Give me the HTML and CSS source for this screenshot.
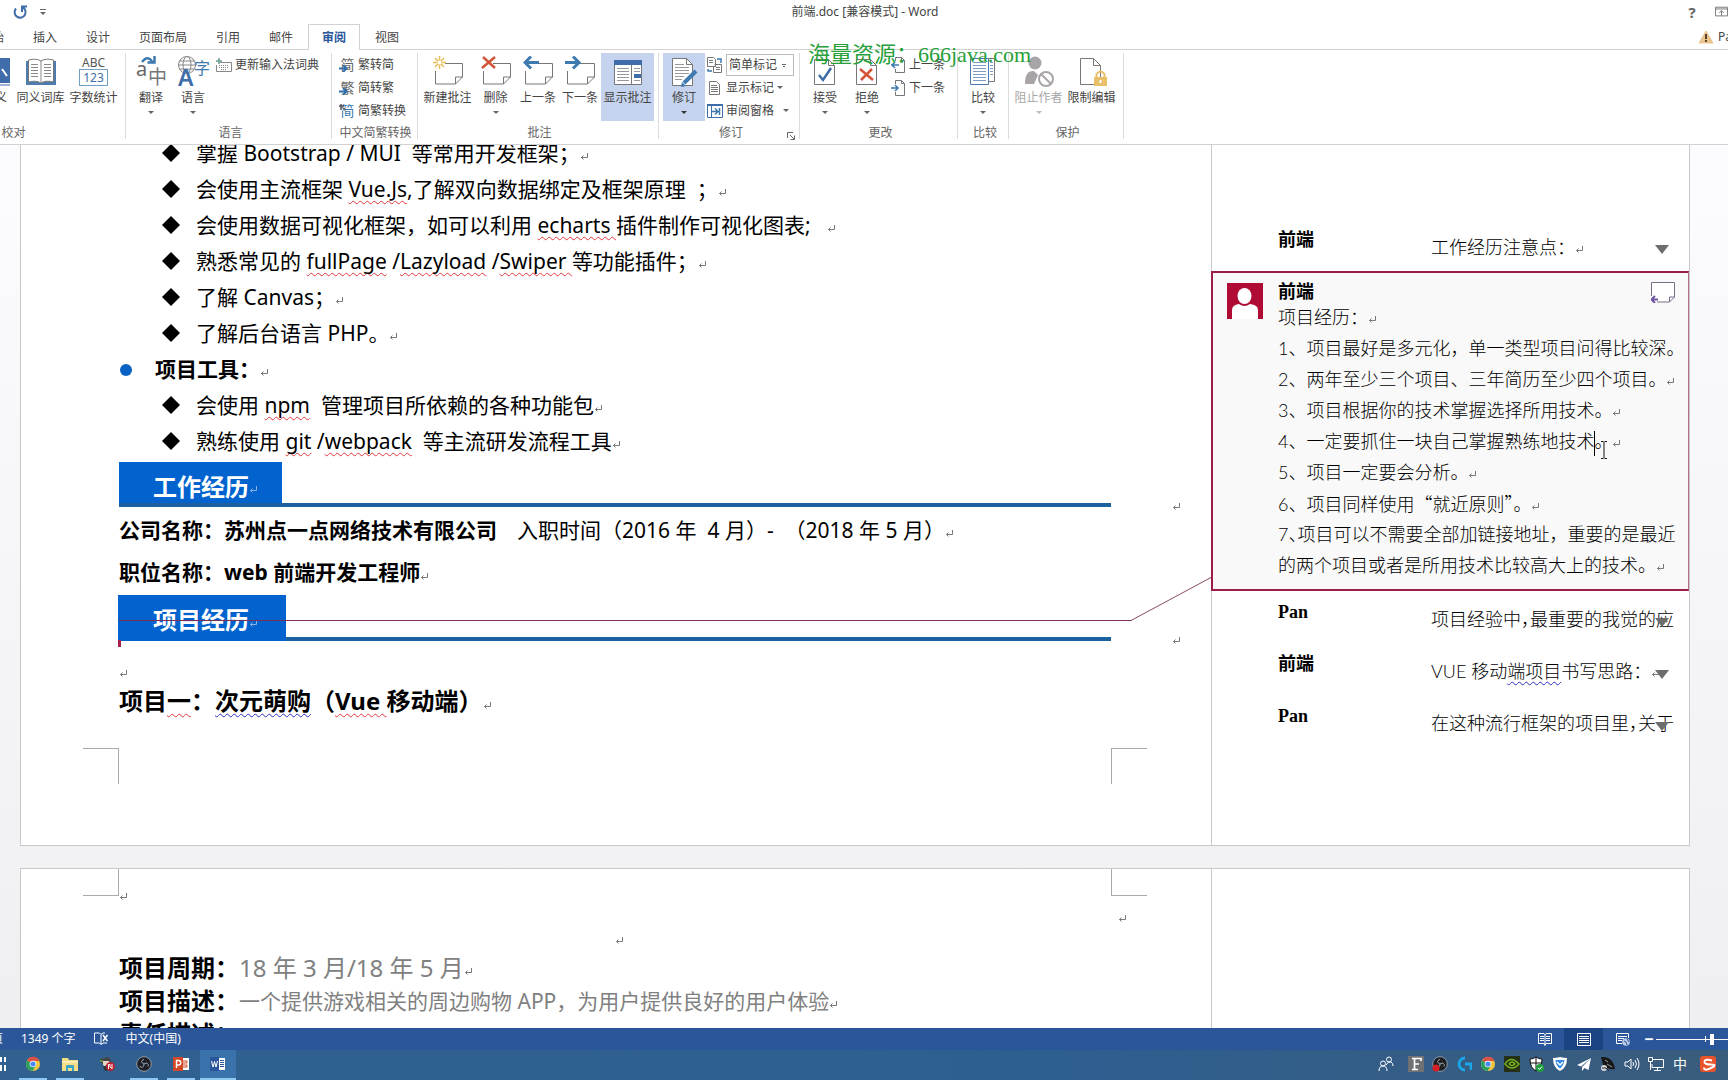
FILE: index.html
```html
<!DOCTYPE html>
<html lang="zh-CN">
<head>
<meta charset="utf-8">
<title>前端.doc [兼容模式] - Word</title>
<link rel="stylesheet" href="styles.css">
</head>
<body>
<svg class="defs" aria-hidden="true">
  <symbol id="ret" viewBox="0 0 9 9"><path d="M7.5 1v4.5H1.5M3.5 3.5l-2 2 2 2" fill="none" stroke="currentColor"/></symbol>
  <symbol id="down" viewBox="0 0 6 3"><path d="M0 0h6L3 3z" fill="currentColor"/></symbol>
  <symbol id="note" viewBox="0 0 30 30"><path d="M12 6.500h17.500V20l-7 7H2.500V14M22.500 27v-7h7" fill="#fff" stroke="#777"/></symbol>
  <symbol id="chrome" viewBox="0 0 16 16"><circle cx="8" cy="8" r="7" fill="#f4c63d"/><path d="M8 8 2 4.400A7 7 0 0 1 14.500 5H8z" fill="#dd5144"/><path d="M8 8 2 4.400A7 7 0 0 0 7.500 15L11 9.500z" fill="#2aa15f"/><circle cx="8" cy="8" r="3.300" fill="#fff"/><circle cx="8" cy="8" r="2.600" fill="#4a8af4"/></symbol>
  <symbol id="obs" viewBox="0 0 16 16"><circle cx="8" cy="8" r="7.300" fill="#1d1f24" stroke="#a9b0b8" stroke-width=".8"/><path d="M8 8C5 7 5 4 8 3.500M8 8c3-2 5 0 4 2.500M8 8c0 4-3 4-4.500 2" fill="none" stroke="#a7adb5" stroke-width="1"/></symbol>
</svg>
<div class="app">
  <header class="titlebar">
    <button class="quick undo" aria-label="恢复"><svg width="16" height="16" viewBox="0 0 16 16"><path d="M4 4.500a5.500 5.500 0 1 0 6-1.500M10 8V2.500h5" fill="none" stroke="#3e6da9" stroke-width="2"/></svg></button>
    <button class="quick" aria-label="自定义快速访问工具栏"><svg width="6" height="7" viewBox="0 0 6 7"><path d="M0 .5h6" stroke="#666"/><path d="M0 3h6L3 6z" fill="#666"/></svg></button>
    <h1>前端.doc [兼容模式] - Word</h1>
    <button class="help" aria-label="帮助">?</button>
    <button class="quick display" aria-label="功能区显示选项"><svg width="15" height="12" viewBox="0 0 15 12"><path d="M.5.5h14v10H.5zM.5 2.500h14M7.500 10V4.500M5 7l2.500-2.500L10 7" fill="none" stroke="#666"/></svg></button>
  </header>
  <nav class="tabs">
    <button class="t-home">开始</button><button>插入</button><button>设计</button><button>页面布局</button><button>引用</button><button>邮件</button><button class="active">审阅</button><button>视图</button>
    <a class="account" href="#"><svg width="16" height="14" viewBox="0 0 16 14"><path d="M8 1 15 13H1z" fill="#e9c48f" stroke="#e9c48f" stroke-linejoin="round"/><path d="M8 4v5M8 10v2" stroke="#54422c" stroke-width="2"/></svg>Pan</a>
  </nav>
  <section class="ribbon">
    <div class="group g-proof">
      <div class="tools">
        <button class="big w-def"><svg width="30" height="30" viewBox="0 0 30 30"><path d="M0 1h30v25H0z" fill="#3e6da9"/><path d="M0 28h30" stroke="#3e6da9"/><path d="m22 12 5 7" stroke="#fff" stroke-width="2"/></svg><span>定义</span></button>
        <button class="big w-52"><svg width="32" height="30" viewBox="0 0 32 30"><path d="M1 4h30v24H1z" fill="#4f7caf"/><path d="M3.500 3q8-2 12.500 1 4.500-3 12.500-1v22q-8-2-12.500 1-4.500-3-12.500-1z" fill="#fff" stroke="#777"/><path d="M16 4v22M6 7.500h7M6 10.500h7M6 13.500h7M6 16.500h7M6 19.500h7M19 7.500h7M19 10.500h7M19 13.500h7M19 16.500h7M19 19.500h7" stroke="#888" fill="none"/></svg><span>同义词库</span></button>
        <button class="big w-52"><span class="count" aria-hidden="true"><i>ABC</i><b>123</b></span><span>字数统计</span></button>
      </div>
      <div class="caption">校对</div>
    </div>
    <div class="group g-lang">
      <div class="tools">
        <button class="big w-42"><span class="glyphs g1"><svg width="30" height="30" viewBox="0 0 30 30"><path d="M6 6q6-8 11 1M11.500 6.500h7V0" fill="none" stroke="#3e7ab0" stroke-width="2.500"/></svg><i>a</i><b>中</b></span><span>翻译</span><svg class="dd"><use href="#down"/></svg></button>
        <button class="big w-42"><span class="glyphs g2"><svg width="30" height="30" viewBox="0 0 30 30"><g fill="none" stroke="#888"><circle cx="9" cy="9" r="8.500"/><ellipse cx="9" cy="9" rx="4" ry="8.500"/><path d="M1 5h16M0 9h18M1 13h16"/></g></svg><i>A</i><b>字</b></span><span>语言</span><svg class="dd"><use href="#down"/></svg></button>
        <div class="stack wide"><button><svg width="16" height="14" viewBox="0 0 16 14"><path d="M4 4.500h11.500v9H.5V7" fill="#fff" stroke="#888"/><path d="M3 7.500h10M3 9.500h10M5 11.500h6" stroke="#888" stroke-dasharray="1 1"/><path d="M3 0v6M0 3h6" stroke="#6a9a95" stroke-width="1.500"/></svg>更新输入法词典</button></div>
      </div>
      <div class="caption">语言</div>
    </div>
    <div class="group g-conv">
      <div class="tools"><div class="stack">
        <button><span class="cn">简<svg width="9" height="7" viewBox="0 0 9 7"><path d="M0 3.500h7M4 0l3.500 3.500L4 7" fill="none" stroke="#2f6fae" stroke-width="2"/></svg></span>繁转简</button>
        <button><span class="cn">繁<svg width="9" height="7" viewBox="0 0 9 7"><path d="M0 3.500h7M4 0l3.500 3.500L4 7" fill="none" stroke="#2f6fae" stroke-width="2"/></svg></span>简转繁</button>
        <button><span class="cn blue">简<svg class="up" width="7" height="7" viewBox="0 0 7 7"><path d="M0 2h5M2 0v6M4 4l3 2" fill="none" stroke="#555" stroke-width="1.500"/></svg></span>简繁转换</button>
      </div></div>
      <div class="caption">中文简繁转换</div>
    </div>
    <div class="group g-note">
      <div class="tools">
        <button class="big w-52"><svg width="30" height="30"><use href="#note"/><path d="M6.500 0v13M0 6.500h13M2 2l9 9M11 2l-9 9" stroke="#e9bd5b" stroke-width="1.500"/><circle cx="6.500" cy="6.500" r="2" fill="#fff"/></svg><span>新建批注</span></button>
        <button class="big w-44"><svg width="30" height="30"><use href="#note"/><path d="m2 1 12 11M14 1 1 12" stroke="#d2553a" stroke-width="2.500"/></svg><span>删除</span><svg class="dd"><use href="#down"/></svg></button>
        <button class="big w-42"><svg width="30" height="30"><use href="#note"/><path d="M2 6.500h14M8 .5l-6 6 6 6" fill="none" stroke="#3e7ab0" stroke-width="3"/></svg><span>上一条</span></button>
        <button class="big w-42"><svg width="30" height="30"><use href="#note"/><path d="M0 6.500h14M8 .5l6 6-6 6" fill="none" stroke="#3e7ab0" stroke-width="3"/></svg><span>下一条</span></button>
        <button class="big w-52 on"><svg width="30" height="30" viewBox="0 0 30 30"><path d="M1.500 3.500h27v24h-27z" fill="#fff" stroke="#777"/><path d="M1 3h28v5H1z" fill="#3e6da9"/><path d="M4 11.500h12M4 14.500h12M4 17.500h12M4 20.500h12M4 23.500h12M21 11.500h6M21 14.500h6M21 23.500h6" stroke="#999"/><path d="M18.500 8v19" stroke="#777"/><path d="M21 17h7v4h-7z" fill="#3e6da9"/></svg><span>显示批注</span></button>
      </div>
      <div class="caption">批注</div>
    </div>
    <div class="group g-track">
      <div class="tools">
        <button class="big w-42 on"><svg width="30" height="32" viewBox="0 0 30 32"><path d="M3.500 2.500h14l6 6v21h-20z" fill="#fff" stroke="#777"/><path d="M17.500 2.500v6h6" fill="none" stroke="#777"/><path d="M6 8.500h9M6 11.500h14M6 14.500h14M6 17.500h14M6 20.500h9M6 23.500h7" stroke="#999"/><path d="m15 27 12-12" stroke="#3e7ab0" stroke-width="4"/><path d="m12 31 1-5 4 4z" fill="#3e7ab0"/></svg><span>修订</span><svg class="dd"><use href="#down"/></svg></button>
        <div class="stack">
          <div class="row"><svg width="16" height="16" viewBox="0 0 16 16"><path d="M.5.5h6l2 2v7h-8zM7.500 7.500h7v8h-8v-6M2 3.500h4M2 5.500h4M9 10.500h4M9 12.500h4" fill="none" stroke="#777"/><path d="M10 2h4v4M1 12v2h4" fill="none" stroke="#3e7ab0" stroke-width="1.500"/></svg><select aria-label="显示以供审阅"><option>简单标记</option></select></div>
          <button><svg width="16" height="16" viewBox="0 0 16 16"><path d="M2.500 1.500h7l3 3v10h-10zM4 5.500h6M4 7.500h7M4 9.500h7M4 11.500h7" fill="#fff" stroke="#777"/></svg>显示标记<svg class="dd"><use href="#down"/></svg></button>
          <button><svg width="16" height="14" viewBox="0 0 16 14"><path d="M.5.5h15v13H.5zM4.500 2v12" fill="#fff" stroke="#3e6da9"/><path d="M0 1h16" stroke="#3e6da9" stroke-width="2"/><path d="M5 7.500h6M8 4.500l3 3-3 3M12.500 4v7" fill="none" stroke="#3e7ab0" stroke-width="1.500"/></svg>审阅窗格<svg class="dd far"><use href="#down"/></svg></button>
        </div>
      </div>
      <div class="caption">修订</div>
      <button class="launch" aria-label="修订选项"><svg width="8" height="8" viewBox="0 0 8 8"><path d="M.5 6V.5H6M3 3l4 4M7.500 3.500v4h-4" fill="none" stroke="#666"/></svg></button>
    </div>
    <div class="group g-change">
      <div class="tools">
        <button class="big w-42"><svg width="30" height="30" viewBox="0 0 30 30"><path d="M4.500 2.500h14l6 6v19h-20z" fill="#fff" stroke="#777"/><path d="M18.500 2.500v6h6" fill="none" stroke="#777"/><path d="m9 18 4 5 8-12" fill="none" stroke="#3e6da9" stroke-width="2.500"/></svg><span>接受</span><svg class="dd"><use href="#down"/></svg></button>
        <button class="big w-42"><svg width="30" height="30" viewBox="0 0 30 30"><path d="M4.500 2.500h14l6 6v19h-20z" fill="#fff" stroke="#777"/><path d="M18.500 2.500v6h6" fill="none" stroke="#777"/><path d="m8 12 13 11M20 12 9 23" stroke="#d2553a" stroke-width="2.500"/></svg><span>拒绝</span><svg class="dd"><use href="#down"/></svg></button>
        <div class="stack">
          <button><svg width="16" height="16" viewBox="0 0 16 16"><path d="M5.500 4V.5h6l3 3v12h-9V12M11.500.5v3h3" fill="none" stroke="#777"/><path d="M1 8h8M5 5 2 8l3 3" fill="none" stroke="#3e7ab0" stroke-width="1.500"/></svg>上一条</button>
          <button><svg width="16" height="16" viewBox="0 0 16 16"><path d="M5.500 4V.5h6l3 3v12h-9V12M11.500.5v3h3" fill="none" stroke="#777"/><path d="M1 8h7M5 5l3 3-3 3" fill="none" stroke="#3e7ab0" stroke-width="1.500"/></svg>下一条</button>
        </div>
      </div>
      <div class="caption">更改</div>
    </div>
    <div class="group g-cmp">
      <div class="tools"><button class="big w-42"><svg width="30" height="30" viewBox="0 0 30 30"><path d="M8.500 1.500h18v23h-18z" fill="#fff" stroke="#777"/><path d="M2.500 1.500h18v26h-18z" fill="#fff" stroke="#4f7caf"/><path d="M5 5.500h13M5 8.500h13M5 11.500h13M5 14.500h13M5 17.500h13M5 20.500h13M5 23.500h13M22 5.500h3M22 8.500h3M22 11.500h3M22 14.500h3M22 17.500h3" stroke="#7d9dc4"/></svg><span>比较</span><svg class="dd"><use href="#down"/></svg></button></div>
      <div class="caption">比较</div>
    </div>
    <div class="group g-prot">
      <div class="tools">
        <button class="big w-52" disabled><svg width="30" height="30" viewBox="0 0 30 30"><g fill="#a9a4a8"><circle cx="11" cy="6" r="6.500"/><path d="M1 27q0-14 9-13l4 4-4 9z"/></g><circle cx="22" cy="22" r="7" fill="#fff" stroke="#a9a4a8" stroke-width="2"/><path d="m17 17 10 10" stroke="#a9a4a8" stroke-width="2"/></svg><span>阻止作者</span><svg class="dd"><use href="#down"/></svg></button>
        <button class="big w-52"><svg width="30" height="30" viewBox="0 0 30 30"><path d="M3.500 1.500h13l7 7v19h-20z" fill="#fff" stroke="#777"/><path d="M16.500 1.500v7h7" fill="none" stroke="#777"/><path d="M17 20h13v9H17z" fill="#e9bf68"/><path d="M19.500 20v-3q4-5 8 0v3" fill="none" stroke="#e9bf68" stroke-width="2"/><path d="M23.500 23v3" stroke="#fff" stroke-width="2"/></svg><span>限制编辑</span></button>
      </div>
      <div class="caption">保护</div>
    </div>
  </section>
  <div class="watermark">海量资源：666java.com</div>

  <main class="canvas">
    <article class="page first">
      <div class="body">
        <ul class="skills">
          <li>掌握 Bootstrap / MUI&nbsp; 等常用开发框架；<svg class="ret"><use href="#ret"/></svg></li>
          <li>会使用主流框架 <u>Vue.Js</u>,了解双向数据绑定及框架原理&nbsp; ；<svg class="ret"><use href="#ret"/></svg></li>
          <li>会使用数据可视化框架，如可以利用 <u>echarts </u>插件制作可视化图表;&nbsp;&nbsp; <svg class="ret"><use href="#ret"/></svg></li>
          <li>熟悉常见的 <u>fullPage</u> /<u>Lazyload</u> /<u>Swiper </u>等功能插件；<svg class="ret"><use href="#ret"/></svg></li>
          <li>了解 Canvas；<svg class="ret"><use href="#ret"/></svg></li>
          <li>了解后台语言 PHP。<svg class="ret"><use href="#ret"/></svg></li>
        </ul>
        <h3 class="tools-title">项目工具：<svg class="ret"><use href="#ret"/></svg></h3>
        <ul class="skills">
          <li>会使用 <u>npm</u>&nbsp; 管理项目所依赖的各种功能包<svg class="ret"><use href="#ret"/></svg></li>
          <li>熟练使用 <u>git</u> /<u>webpack</u>&nbsp; 等主流研发流程工具<svg class="ret"><use href="#ret"/></svg></li>
        </ul>
        <div class="bar"><h2>工作经历<svg class="ret"><use href="#ret"/></svg></h2><svg class="ret end"><use href="#ret"/></svg></div>
        <div class="job">
          <p><b>公司名称：苏州点一点网络技术有限公司</b><span class="when">入职时间（2016 年&nbsp; 4 月）-&nbsp; （2018 年 5 月）</span><svg class="ret"><use href="#ret"/></svg></p>
          <p><b>职位名称：web 前端开发工程师</b><svg class="ret"><use href="#ret"/></svg></p>
        </div>
        <div class="bar marked"><h2>项目经历<svg class="ret"><use href="#ret"/></svg></h2><svg class="ret end"><use href="#ret"/></svg>
          <span class="link-line"></span><svg class="link-slope" viewBox="0 0 80 44"><path d="M0 43.500 80 .5" stroke="#8a4a63" fill="none"/></svg><span class="anchor"></span>
        </div>
        <p class="blank lead"><svg class="ret"><use href="#ret"/></svg></p>
        <h3 class="project">项目<u>一</u>：<u class="gram">次元萌购</u>（<u>Vue </u>移动端）<svg class="ret"><use href="#ret"/></svg></h3>
        <div class="crops bottom"><span></span><span></span></div>
      </div>
      <aside class="comments">
        <div class="thread top"><b>前端</b><p>工作经历注意点：<svg class="ret"><use href="#ret"/></svg></p><svg class="more" viewBox="0 0 14 9"><path d="M0 0h14L7 9z" fill="#6d6d6d"/></svg></div>
        <div class="open">
          <svg class="avatar" viewBox="0 0 36 36"><path d="M0 0h36v36H0z" fill="#b00b35"/><ellipse cx="17.500" cy="13" rx="7" ry="8" fill="#fff"/><path d="M5 36V27q0-5 7-6 5.500 4 11 0 8 1 8 6v9z" fill="#fff"/></svg>
          <div class="text">
            <b>前端</b>
            <p class="intro">项目经历：<svg class="ret"><use href="#ret"/></svg></p>
            <p>1、项目最好是多元化，单一类型项目问得比较深。</p>
            <p>2、两年至少三个项目、三年简历至少四个项目。<svg class="ret"><use href="#ret"/></svg></p>
            <p>3、项目根据你的技术掌握选择所用技术。<svg class="ret"><use href="#ret"/></svg></p>
            <p>4、一定要抓住一块自己掌握熟练地技术<span class="caret"><svg width="8" height="18" viewBox="0 0 8 18"><path d="M1 .5h2.500M4.500.5H7M1 17.500h2.500M4.500 17.500H7M4 1v16" stroke="#111" fill="none"/></svg></span>。<svg class="ret"><use href="#ret"/></svg></p>
            <p>5、项目一定要会分析。<svg class="ret"><use href="#ret"/></svg></p>
            <p>6、项目同样使用<span class="q">“</span>就近原则<span class="q">”</span>。<svg class="ret"><use href="#ret"/></svg></p>
            <p>7<span class="half">、</span>项目可以不需要全部加链接地址，重要的是最近</p>
            <p>的两个项目或者是所用技术比较高大上的技术。<svg class="ret"><use href="#ret"/></svg></p>
          </div>
          <button class="reply" aria-label="答复"><svg width="24" height="21" viewBox="0 0 24 21"><path d="M.5 14V.5h23V15l-5 5H6M18.500 20v-5h5" fill="#fff" stroke="#7a6d84"/><path d="M1 17.500h6M4 14l-3.500 3.500L4 21" fill="none" stroke="#7256a0" stroke-width="2"/></svg></button>
        </div>
        <div class="thread"><b>Pan</b><p>项目经验中<span class="half">，</span>最重要的我觉的应</p><svg class="more" viewBox="0 0 14 9"><path d="M0 0h14L7 9z" fill="#6d6d6d"/></svg></div>
        <div class="thread"><b>前端</b><p>VUE 移动<u class="gram">端项目</u>书写思路：<svg class="ret"><use href="#ret"/></svg></p><svg class="more" viewBox="0 0 14 9"><path d="M0 0h14L7 9z" fill="#6d6d6d"/></svg></div>
        <div class="thread"><b>Pan</b><p>在这种流行框架的项目里<span class="half">，</span>关于</p><svg class="more" viewBox="0 0 14 9"><path d="M0 0h14L7 9z" fill="#6d6d6d"/></svg></div>
      </aside>
    </article>
    <article class="page second">
      <div class="body">
        <div class="crops"><span></span><span></span></div>
        <p class="blank at-crop"><svg class="ret"><use href="#ret"/></svg></p>
        <p class="blank right"><svg class="ret"><use href="#ret"/></svg></p>
        <p class="blank center"><svg class="ret"><use href="#ret"/></svg></p>
        <div class="detail">
          <p><b>项目周期：</b><span class="large">18 年 3 月/18 年 5 月</span><svg class="ret"><use href="#ret"/></svg></p>
          <p><b>项目描述：</b><span>一个提供游戏相关的周边购物 APP，为用户提供良好的用户体验</span><svg class="ret"><use href="#ret"/></svg></p>
          <p><b>责任描述：</b></p>
        </div>
      </div>
      <aside class="comments"></aside>
    </article>
  </main>

  <footer class="status">
    <span class="pages">页</span><span class="words">1349 个字</span>
    <button aria-label="校对"><svg width="15" height="14" viewBox="0 0 15 14"><path d="M7 2.500 5.500 1H.5v10h5L7 12.500zM7 2.500 9 1h2M7 12.500 9 11h4" fill="none" stroke="#fff"/><path d="m9 3 4.500 6M13.500 3 9 9" stroke="#fff" stroke-width="1.500"/></svg></button>
    <span>中文(中国)</span>
    <div class="views">
      <button aria-label="阅读视图"><svg width="14" height="13" viewBox="0 0 14 13"><path d="M.5.5H6l1 1 1-1h5.500v10H8l-1 2-1-2H.5zM7 1v11M2 3.500h4M2 5.500h4M2 7.500h4M8 3.500h4M8 5.500h4M8 7.500h4" fill="none" stroke="#fff"/></svg></button>
      <button class="on" aria-label="页面视图"><svg width="14" height="13" viewBox="0 0 14 13"><path d="M.5.5h13v12H.5zM2 3.500h10M2 5.500h10M2 7.500h10M2 9.500h10" fill="none" stroke="#fff"/></svg></button>
      <button aria-label="Web 版式视图"><svg width="14" height="13" viewBox="0 0 14 13"><path d="M12.500 5V.5H.5v10H6M2 3.500h9M2 5.500h6M2 7.500h4" fill="none" stroke="#fff"/><circle cx="10" cy="9" r="3.800" fill="#b9cbe6"/><path d="m8 8 2 1 1 3M11 6l2 3" stroke="#2b579a" fill="none"/></svg></button>
      <button class="minus" aria-label="缩小">−</button>
      <input class="zoom" type="range" aria-label="显示比例" min="0" max="100" value="51">
    </div>
  </footer>
  <footer class="taskbar">
    <button class="start" aria-label="任务视图"><svg width="16" height="16" viewBox="0 0 16 16"><path d="M2 1h9v5H2zM2 9h9v6H2zM13 1h2v5h-2zM13 9h2v6h-2z" fill="#fff"/></svg></button>
    <button class="run" aria-label="Chrome"><svg width="16" height="16"><use href="#chrome"/></svg></button>
    <button class="run" aria-label="文件资源管理器"><svg width="16" height="16" viewBox="0 0 16 16"><path d="M0 2h6l1 2h9v11H0z" fill="#f5dc86"/><path d="M0 5h16v2H0z" fill="#fbeeb5"/><path d="M4 15v-5q0-1 1-1h6q1 0 1 1v5h-2v-3H6v3z" fill="#39a6c9"/></svg></button>
    <button aria-label="工具"><svg width="16" height="16" viewBox="0 0 16 16"><path d="M1 3 9 1l3 3-2 4H3z" fill="#444"/><path d="M4 5h6l1 3-4 3-3-2z" fill="#e8d8c8"/><path d="M1 4h3v2H1z" fill="#5e8f42"/><path d="m4 11 4-2 2 5-4 1z" fill="#333"/><circle cx="11.500" cy="10.500" r="4.500" fill="#b6222f"/><path d="M9.500 13V8.500h1.500v2l1.500 2M13 8v5" fill="none" stroke="#fff"/></svg></button>
    <button class="run" aria-label="OBS"><svg width="16" height="16"><use href="#obs"/></svg></button>
    <button class="run" aria-label="PowerPoint"><svg width="16" height="16" viewBox="0 0 16 16"><path d="M9 2h7v12H9z" fill="#fff"/><path d="M10 5h4v2h-4M10 9h4v2h-4" stroke="#d24726" fill="none"/><path d="M0 1h10v14H0z" fill="#d24726"/><path d="M3.500 12V4.500H5.500a2 2 0 0 1 0 4.500h-2" stroke="#fff" stroke-width="1.500" fill="none"/></svg></button>
    <button class="run here" aria-label="Word"><svg width="16" height="16" viewBox="0 0 16 16"><path d="M8 2h7v12H8z" fill="#fff"/><path d="M10 4.500h4M10 6.500h4M10 8.500h4M10 10.500h4" stroke="#2b579a"/><path d="M0 1h9v14H0z" fill="#2b579a"/><path d="m1.500 5 1.500 6 1.500-5.500L6 11l1.500-6" stroke="#fff" fill="none"/></svg></button>
    <div class="tray">
      <button class="people" aria-label="人脉"><svg width="16" height="16" viewBox="0 0 16 16"><g fill="none" stroke="#fff"><circle cx="11" cy="3.500" r="2.500"/><circle cx="5" cy="7.500" r="2.500"/><path d="M8 9q2-4 5-3 2 1 2 4M1 15q0-5 4-5t4 5"/></g></svg></button>
      <button aria-label="字体"><svg width="16" height="16" viewBox="0 0 16 16"><path d="M0 0h16v16H0z" fill="#6f7174"/><path d="M4 2.500h9V5M6.500 3v10M4 13.500h6M7 8h4" fill="none" stroke="#fff" stroke-width="1.700"/></svg></button>
      <button aria-label="录制"><svg width="16" height="16"><use href="#obs"/><circle cx="4" cy="12" r="3.500" fill="#d81f26"/></svg></button>
      <button aria-label="Logitech"><svg width="16" height="16" viewBox="0 0 16 16"><path d="M9 2a6 6 0 1 0 0 12M9 8h6v6" fill="none" stroke="#1aa5e8" stroke-width="2.800"/></svg></button>
      <button aria-label="Chrome"><svg width="16" height="16"><use href="#chrome"/></svg></button>
      <button aria-label="NVIDIA"><svg width="16" height="16" viewBox="0 0 16 16"><path d="M0 0h16v16H0z" fill="#253017"/><path d="M1 8q6-9 14 0-7 8-14 0zM5 8q3-4 6 0-3 3-6 0" fill="none" stroke="#77b51c" stroke-width="1.500"/></svg></button>
      <button aria-label="安全中心"><svg width="16" height="16" viewBox="0 0 16 16"><path d="M8 1q3 2 6 2 0 9-6 12Q2 12 2 3q3 0 6-2z" fill="#fff" stroke="#111"/><path d="M8 1v14M2 7h12" stroke="#111"/><circle cx="12" cy="12" r="4" fill="#1e9e3e"/><path d="m10 12 1.500 1.500L14 10.500" fill="none" stroke="#fff"/></svg></button>
      <button aria-label="电脑管家"><svg width="16" height="16" viewBox="0 0 16 16"><path d="M8 1q4 1 7 1 0 10-7 13Q1 12 1 2q3 0 7-1z" fill="#fff"/><path d="M3.500 4h9q-1 6-4.500 8.500Q4 10 3.500 4z" fill="#2e8ae6"/><path d="m5 6 3 3 3-3" fill="none" stroke="#fff" stroke-width="1.500"/></svg></button>
      <button aria-label="纸飞机"><svg width="16" height="16" viewBox="0 0 16 16"><path d="M15 2 1 9l4 1.500zM15 2 6 11v4l2.500-3 4 2z" fill="#fff"/></svg></button>
      <button aria-label="QQ"><svg width="16" height="16" viewBox="0 0 16 16"><path d="M1 1q12-1 14 12-7 1-12-4z" fill="#171717"/><path d="m5 4 3 2M7 8l5 3" stroke="#999"/><circle cx="4" cy="12" r="3" fill="#d8d8d8"/><path d="M2 12h4l3 3" stroke="#222" fill="none"/></svg></button>
      <button aria-label="音量"><svg width="16" height="16" viewBox="0 0 16 16"><path d="M1 6h3l3-3v10l-3-3H1zM9 6q1 2 0 4M11 4q3 4 0 8M13 2q4 6 0 12" fill="none" stroke="#fff"/></svg></button>
      <button aria-label="网络"><svg width="16" height="16" viewBox="0 0 16 16"><path d="M5 3.500h10.500v8H4V8M9.500 12v2M6 14.500h7M.5 1.500h4v4h-4zM2.500 5v9" fill="none" stroke="#fff"/></svg></button>
      <button class="ime" aria-label="输入法">中</button>
      <button class="sogou" aria-label="搜狗"><svg width="16" height="16" viewBox="0 0 16 16"><rect width="16" height="16" rx="3" fill="#e9532b"/><path d="M12 4.500Q5 2.500 4.500 5.500T11 8.500 11 12t-7-.5" fill="none" stroke="#fff" stroke-width="2"/></svg></button>
    </div>
  </footer>
</div>
</body>
</html>
```
FILE: styles.css
```css
* { box-sizing: border-box; margin: 0; padding: 0; }
body { font: 12px/16px "Noto Sans", "Noto Sans CJK SC", sans-serif; color: #444; background: #fff; }
button { border: 0; background: none; font: inherit; color: inherit; }
a { color: inherit; text-decoration: none; }
i { font-style: normal; }
ul { list-style: none; }
.defs { position: absolute; width: 0; height: 0; }
.app { position: relative; display: flex; flex-direction: column; height: 100vh; overflow: hidden; }

.titlebar { display: flex; align-items: center; height: 24px; flex: none; padding-left: 12px; }
.titlebar h1 { flex: 1; font-size: 12px; font-weight: 400; text-align: center; }
.quick { display: flex; }
.undo { margin-right: 12px; }
.help { width: 16px; margin-right: 15px; font-size: 15px; font-weight: 700; color: #666; }
.display { width: 13px; overflow: hidden; }

.tabs { display: flex; align-items: stretch; height: 26px; flex: none; border-bottom: 1px solid #d2d2d2; }
.tabs button { padding: 0 13px; height: 26px; line-height: 23px; margin-right: 1px; min-width: 52px; border: 1px solid transparent; border-bottom: 0; }
.tabs .t-home { margin-left: -34px; }
.tabs .active { border-color: #d2d2d2; background: #fff; color: #2b579a; font-weight: 700; }
.account { display: flex; align-items: center; gap: 4px; margin-left: auto; width: 30px; white-space: nowrap; overflow: hidden; }
.account svg { flex: none; }

.ribbon { display: flex; flex: none; height: 95px; padding: 3px 0 5px; border-bottom: 1px solid #d2d2d2; overflow: hidden; }
.group { position: relative; display: flex; flex-direction: column; justify-content: space-between; border-right: 1px solid #dcdcdc; flex: none; }
.caption { text-align: center; line-height: 12px; color: #666; }
.tools { display: flex; align-items: flex-start; }
.big { display: flex; flex-direction: column; align-items: center; height: 68px; padding-top: 3px; white-space: nowrap; flex: none; }
.big > svg:first-child { height: 32px; }
.big > span:not(.count):not(.glyphs) { line-height: 20px; }
.big .dd { margin-top: 3px; }
.dd { width: 6px; height: 3px; color: #666; flex: none; }
.on { background: #c5d3ee; }
.on .dd { color: #333; }
button:disabled { color: #a6a6a6; }
button:disabled .dd { color: #bbb; }
.w-def { width: 38px; }
.w-52 { width: 53px; }
.w-44 { width: 43px; }
.w-42 { width: 42px; }
.g-proof { width: 224px; margin-left: -98px; }
.g-proof .tools { justify-content: flex-end; padding-right: 5px; }
.g-lang { width: 206px; padding-left: 4px; }
.g-conv { width: 86px; padding-left: 4px; }
.g-conv .caption { margin: 0 -2px 0 -4px; white-space: nowrap; }
.g-note { width: 241px; padding-left: 3px; }
.g-track { width: 141px; padding-left: 4px; }
.g-change { width: 158px; padding-left: 4px; }
.g-cmp { width: 51px; padding-left: 4px; }
.g-prot { width: 115px; padding-left: 3px; }
.stack { display: flex; flex-direction: column; padding-left: 2px; }
.g-conv .stack { padding-left: 4px; }
.g-change .stack { padding-left: 2px; }
.stack button, .row { display: flex; align-items: center; gap: 3px; height: 23px; white-space: nowrap; }
.row select { width: 68px; height: 22px; padding: 0 2px; border: 1px solid #bbb; font: inherit; color: inherit; appearance: none; background: linear-gradient(#666, #666) no-repeat right 7px center / 4px 1px, linear-gradient(#666, #666) no-repeat right 8px top 11px / 2px 1px, #fff; }
.stack .far { margin-left: 6px; }
.launch { position: absolute; right: 4px; bottom: -1px; }
.launch svg { display: block; }
.count { display: flex; flex-direction: column; align-items: center; height: 32px; color: #555; line-height: 13px; font-size: 12px; }
.count b { font-weight: 400; border: 1px solid #6f9fc2; color: #3e6da9; padding: 0 3px; line-height: 15px; }
.glyphs { position: relative; width: 30px; height: 32px; }
.glyphs > * { position: absolute; line-height: 20px; font-weight: 400; }
.glyphs svg { left: 0; top: 0; }
.g1 i { left: 0; top: 3px; font-size: 20px; color: #666; }
.g1 b { right: -1px; top: 11px; font-size: 19px; color: #777; }
.g2 i { left: 0; top: 11px; font-size: 23px; font-weight: 600; color: #3e6da9; }
.g2 b { right: -2px; top: 2px; font-size: 16px; color: #3e7ab0; }
.cn { position: relative; width: 15px; font-size: 14px; color: #666; }
.cn.blue { color: #3e7ab0; }
.cn svg { position: absolute; left: -1px; bottom: 1px; }
.cn .up { bottom: auto; top: 1px; }
.watermark { position: absolute; left: 808px; top: 42px; font: 22px/26px "Liberation Serif", "Noto Sans CJK SC", serif; color: #27a03a; white-space: nowrap; }

.canvas { flex: 1; min-height: 0; overflow: hidden; padding: 0 38px 0 20px; background: linear-gradient(#fcfbfd, #efeef1); color: #000; }
.page { display: flex; background: #fff; border: 1px solid #c9c9cb; }
.first { border-top: 0; }
.second { margin-top: 22px; height: 300px; }
.body { flex: 1; min-width: 0; padding: 0 100px 0 98px; white-space: nowrap; }
.ret { width: 9px; height: 9px; color: #777; flex: none; }
.skills { font-size: 21px; }
.skills li { display: flex; align-items: center; height: 36px; padding-left: 43px; white-space: pre; }
.skills li::before { content: ""; width: 18px; height: 18px; margin-right: 16px; background: #000; clip-path: polygon(50% 0, 100% 50%, 50% 100%, 0 50%); }
.skills:first-child { margin-top: -10px; }
.skills .ret, .tools-title .ret, .when + .ret { margin: 6px 0 0 0; }
u { text-decoration: underline wavy #e0393e 1px; text-underline-offset: 3px; text-decoration-skip-ink: none; }
u.gram { text-decoration-color: #3030c8; }
.tools-title { display: flex; align-items: center; height: 36px; font-size: 21px; line-height: 36px; }
.tools-title::before { content: ""; width: 12px; height: 12px; margin: 2px 23px 0 1px; border-radius: 50%; background: #0a63c4; }
.bar { position: relative; display: flex; height: 45px; margin-top: 3px; border-bottom: 4px solid #1c619f; }
.bar h2 { display: flex; align-items: center; width: 163px; padding: 8px 0 0 34px; font-size: 24px; line-height: 32px; color: #fff; background: #0263cf; }
.bar .ret { margin-top: 6px; color: #8fb2dc; }
.bar .end { position: absolute; right: -70px; bottom: -8px; color: #777; }
.marked { height: 46px; margin-top: 0; }
.marked h2 { width: 168px; margin: 0 0 -4px -1px; padding: 4px 0 0 35px; }
.link-line { position: absolute; left: 0; right: -20px; top: 25px; height: 1px; background: #7a2f55; }
.link-slope { position: absolute; right: -100px; top: -18px; width: 80px; height: 44px; }
.anchor { position: absolute; left: -1px; top: 45px; width: 3px; height: 7px; background: #a3204a; }
.job { padding: 2px 0; font-size: 21px; }
.job p { display: flex; align-items: center; height: 42px; }
.when { margin-left: 20px; white-space: pre; }
.job p + p .ret { margin-top: 8px; }
.blank { display: flex; align-items: center; height: 22px; }
.lead { margin-top: 21px; }
.project { display: flex; align-items: center; height: 34px; font-size: 24px; line-height: 34px; white-space: pre; }
.project .ret { margin: 8px 0 0 0; }
.crops { display: flex; justify-content: space-between; margin: 0 -36px; }
.crops span { width: 36px; height: 27px; border: 0 solid #aaa; border-width: 0 1px 1px 0; }
.crops span:last-child { border-width: 0 0 1px 1px; }
.crops.bottom { padding: 30px 0 61px; }
.crops.bottom span { height: 36px; border-width: 1px 1px 0 0; }
.crops.bottom span:last-child { border-width: 1px 0 0 1px; }
.at-crop { margin-top: -11px; }
.right { justify-content: flex-end; margin-right: -16px; }
.center { justify-content: center; padding-left: 8px; }
.detail { font-size: 24px; }
.detail p { display: flex; align-items: center; height: 33px; }
.detail span { font-size: 21px; color: #808080; }
.detail .large { font-size: 24px; }
.detail .ret { margin-top: 8px; }

.comments { width: 478px; flex: none; border-left: 1px solid #c9c9cb; font: 300 18px/30px Lato, "Noto Sans CJK SC", sans-serif; color: #000; white-space: nowrap; }
.comments b { font: 700 18px/30px "Liberation Serif", "Noto Sans CJK SC", serif; }
.thread { position: relative; display: flex; height: 52px; padding: 6px 14px 0 66px; }
.thread.top { height: 46px; padding-top: 0; margin-top: 80px; }
.thread b { width: 153px; flex: none; }
.thread p { margin-top: 7px; }
.more { position: absolute; right: 20px; top: 27px; width: 14px; height: 9px; }
.thread.top .more { top: 20px; }
.open { display: flex; align-items: flex-start; margin-left: -1px; height: 320px; padding: 7px 14px 0 14px; border: 2px solid #9a2145; border-right: 1px solid #bb6c85; background: #f9f9f9; position: relative; }
.avatar { width: 36px; height: 36px; margin: 3px 15px 0 0; flex: none; }
.text { flex: 1; }
.text b { display: block; line-height: 25px; }
.text p { height: 31px; line-height: 31px; }
.text .intro { height: 28px; line-height: 25px; }
.half { font-feature-settings: "halt"; }
.q { font-family: "Noto Sans CJK SC", sans-serif; }
.caret { position: relative; display: inline-block; height: 25px; border-left: 1px solid #000; margin-right: -1px; vertical-align: middle; }
.caret svg { position: absolute; left: 5px; top: 10px; }
.reply { position: absolute; right: 13px; top: 9px; }
.reply svg { display: block; }

.status { display: flex; align-items: center; flex: none; height: 22px; background: #2b579a; color: #fff; }
.pages { margin-left: -9px; width: 12px; }
.words { margin: 0 18px; }
.status button { display: flex; }
.status > button { margin-right: 17px; }
.views { display: flex; align-items: center; height: 22px; margin-left: auto; overflow: hidden; }
.views button { width: 39px; height: 22px; align-items: center; justify-content: center; }
.views .on { background: #1b4483; }
.views .minus { width: 14px; font-size: 16px; font-weight: 700; }
.zoom { appearance: none; width: 110px; height: 12px; margin-right: -38px; background: linear-gradient(#fff, #fff) no-repeat center / 100% 1px, linear-gradient(#fff, #fff) no-repeat 49px center / 1px 6px; }
.zoom::-webkit-slider-thumb { appearance: none; width: 4px; height: 11px; background: #fff; }
.taskbar { display: flex; flex: none; height: 30px; background: linear-gradient(90deg, #30618f, #2d5f91 60%, #3a5c7c); }
.taskbar button { display: flex; align-items: center; justify-content: center; width: 28px; margin-right: 9px; border-bottom: 2px solid transparent; }
.taskbar .start { width: 23px; margin: 0 9px 0 -13px; }
.taskbar .run { border-color: #8fc8f2; }
.taskbar .here { width: 36px; background: #3a73ab; margin-left: -4px; }
.taskbar svg { flex: none; }
.tray { display: flex; margin-left: auto; padding-right: 8px; }
.tray button { width: 24px; margin: 0; }
.tray .people { margin-right: 6px; }
.tray .ime { color: #fff; font-size: 14px; }
.tray .sogou { margin-left: 4px; }
```
